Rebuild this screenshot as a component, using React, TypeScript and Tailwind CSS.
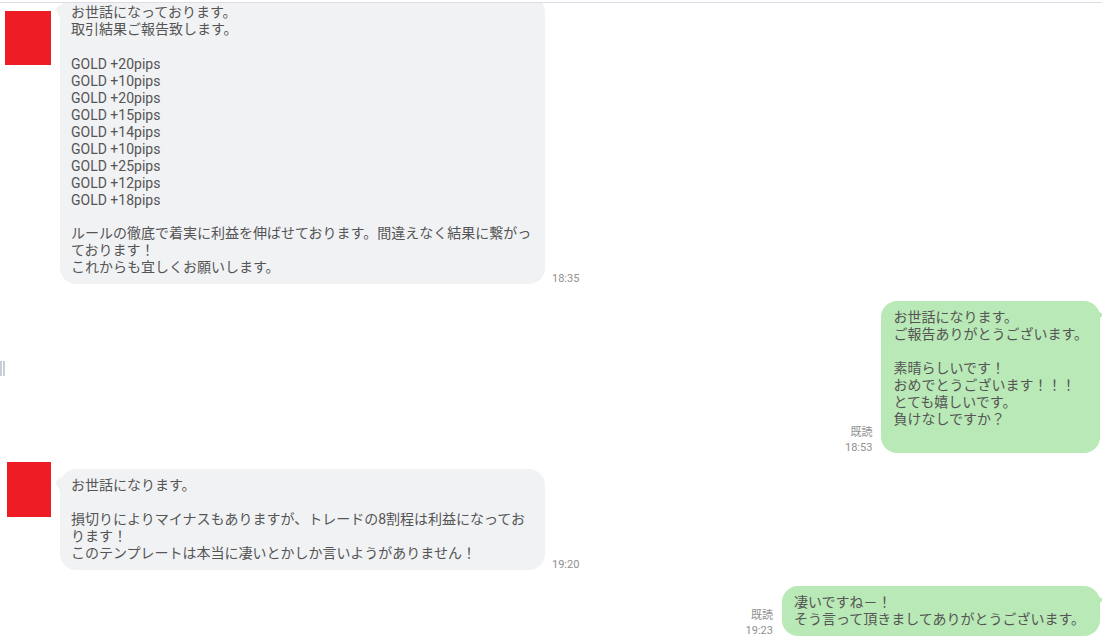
import React from 'react';

type Side = 'left' | 'right';

const LeftTail = () => (
  <svg className="absolute -left-[5px] top-[8px]" width="6" height="15" viewBox="0 0 6 15">
    <path d="M6 0 L0 5 L6 15 Z" fill="#f1f2f4" />
  </svg>
);

const RightTail = () => (
  <svg className="absolute -right-[4px] top-[11px]" width="5" height="7" viewBox="0 0 5 7">
    <path d="M0 0 L5 2 L0 7 Z" fill="#b9e9b6" />
  </svg>
);

const isLatin = (s: string) => /^[A-Za-z0-9 +]+$/.test(s);

const Bubble = ({ side, lines, extra = '' }: { side: Side; lines: string[]; extra?: string }) => (
  <div
    className={
      (side === 'left'
        ? 'relative w-[485px] shrink-0 rounded-2xl bg-[#f1f2f4] py-2 pl-[11px] pr-3 '
        : 'relative shrink-0 rounded-2xl bg-[#b9e9b6] py-2 pl-3 pr-3 ') + extra
    }
  >
    {side === 'left' ? <LeftTail /> : <RightTail />}
    <div className="whitespace-pre text-[14px] leading-[17px] text-[#555555]">
      {lines.map((l, i) => (
        <div key={i} className={isLatin(l) ? 'h-[17px] pt-[2px] leading-[15px]' : 'h-[17px]'}>
          {l}
        </div>
      ))}
    </div>
  </div>
);

const Stamp = ({ read, time }: { read?: boolean; time: string }) => (
  <div className="mb-[-2px] flex flex-col items-end text-[11px] leading-[15px] text-[#909090]">
    {read && <span>既読</span>}
    <span>{time}</span>
  </div>
);

const Avatar = ({ className }: { className: string }) => (
  <div className={'shrink-0 bg-[#ee1c25] ' + className} />
);

export default function App() {
  return (
    <div className="relative flex h-[636px] w-full flex-col overflow-hidden bg-white font-[Roboto,'Noto_Sans_CJK_JP',sans-serif]">
      <div className="h-[2px] shrink-0 bg-white" />
      <div className="h-px shrink-0 bg-[#dedbe6]" />

      <div className="flex min-h-0 flex-1 flex-col overflow-hidden">
        {/* row 1 */}
        <div className="mt-[-7px] flex items-start">
          <Avatar className="ml-[5px] mt-[15px] h-[54px] w-[46px]" />
          <div className="ml-[9px] flex items-end gap-[7px]">
            <Bubble
              side="left"
              lines={[
                'お世話になっております。',
                '取引結果ご報告致します。',
                '',
                'GOLD +20pips',
                'GOLD +10pips',
                'GOLD +20pips',
                'GOLD +15pips',
                'GOLD +14pips',
                'GOLD +10pips',
                'GOLD +25pips',
                'GOLD +12pips',
                'GOLD +18pips',
                '',
                'ルールの徹底で着実に利益を伸ばせております。間違えなく結果に繋がっ',
                'ております！',
                'これからも宜しくお願いします。',
              ]}
            />
            <Stamp time="18:35" />
          </div>
        </div>

        {/* row 2 */}
        <div className="mt-[17px] flex items-end justify-end gap-[9px] pr-[2px]">
          <Stamp read time="18:53" />
          <Bubble
            side="right"
            lines={[
              'お世話になります。',
              'ご報告ありがとうございます。',
              '',
              '素晴らしいです！',
              'おめでとうございます！！！',
              'とても嬉しいです。',
              '負けなしですか？',
              '',
            ]}
          />
        </div>

        {/* row 3 */}
        <div className="mt-[9px] flex items-start">
          <Avatar className="ml-[7px] h-[55px] w-[44px]" />
          <div className="ml-[9px] mt-[7px] flex items-end gap-[7px]">
            <Bubble
              side="left"
              lines={[
                'お世話になります。',
                '',
                '損切りによりマイナスもありますが、トレードの8割程は利益になってお',
                'ります！',
                'このテンプレートは本当に凄いとかしか言いようがありません！',
              ]}
            />
            <Stamp time="19:20" />
          </div>
        </div>

        {/* row 4 */}
        <div className="mt-[16px] flex items-end justify-end gap-[9px] pr-[2px]">
          <Stamp read time="19:23" />
          <Bubble
            side="right"
            extra="pr-[15px]"
            lines={['凄いですね－！', 'そう言って頂きましてありがとうございます。']}
          />
        </div>
      </div>

      {/* resize grip */}
      <div className="absolute left-0 top-[361px] flex gap-px">
        <div className="h-[15px] w-[2px] bg-[#c6ced8]" />
        <div className="h-[15px] w-[2px] bg-[#c6ced8]" />
      </div>
    </div>
  );
}
